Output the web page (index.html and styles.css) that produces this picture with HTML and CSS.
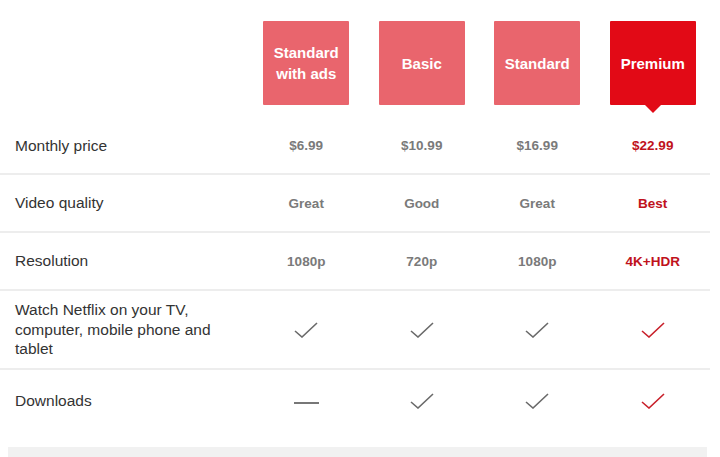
FILE: index.html
```html
<!DOCTYPE html>
<html lang="en">

<head>
  <meta charset="UTF-8" />
  <meta name="viewport" content="width=device-width, initial-scale=1.0" />
  <title>Plan comparison</title>
  <link rel="stylesheet" href="styles.css">
</head>

<body>
  <div class="plans">
    <div class="plan-row header-row">
      <div></div>
      <div class="plan-tile">Standard<br />with ads</div>
      <div class="plan-tile">Basic</div>
      <div class="plan-tile">Standard</div>
      <div class="plan-tile selected">Premium</div>
    </div>

    <div class="plan-row price-row">
      <div class="feature">Monthly price</div>
      <div class="value">$6.99</div>
      <div class="value">$10.99</div>
      <div class="value">$16.99</div>
      <div class="value selected">$22.99</div>
    </div>

    <div class="plan-row">
      <div class="feature">Video quality</div>
      <div class="value">Great</div>
      <div class="value">Good</div>
      <div class="value">Great</div>
      <div class="value selected">Best</div>
    </div>

    <div class="plan-row">
      <div class="feature">Resolution</div>
      <div class="value">1080p</div>
      <div class="value">720p</div>
      <div class="value">1080p</div>
      <div class="value selected">4K+HDR</div>
    </div>

    <div class="plan-row tall-row">
      <div class="feature">Watch Netflix on your TV,<br />computer, mobile phone and<br />tablet</div>
      <div class="value"><svg class="check" viewBox="0 0 24 16"><path d="M1 9 L8 15 L23 1" /></svg></div>
      <div class="value"><svg class="check" viewBox="0 0 24 16"><path d="M1 9 L8 15 L23 1" /></svg></div>
      <div class="value"><svg class="check" viewBox="0 0 24 16"><path d="M1 9 L8 15 L23 1" /></svg></div>
      <div class="value selected"><svg class="check" viewBox="0 0 24 16"><path d="M1 9 L8 15 L23 1" /></svg></div>
    </div>

    <div class="plan-row last-row">
      <div class="feature">Downloads</div>
      <div class="value"><span class="dash"></span></div>
      <div class="value"><svg class="check" viewBox="0 0 24 16"><path d="M1 9 L8 15 L23 1" /></svg></div>
      <div class="value"><svg class="check" viewBox="0 0 24 16"><path d="M1 9 L8 15 L23 1" /></svg></div>
      <div class="value selected"><svg class="check" viewBox="0 0 24 16"><path d="M1 9 L8 15 L23 1" /></svg></div>
    </div>

    <div class="bottom-bar"></div>
  </div>
</body>

</html>
```

FILE: styles.css
```css
body {
  margin: 0;
  background: #ffffff;
  font-family: "Liberation Sans", Arial, sans-serif;
}

.plans {
  width: 710px;
}

.plan-row {
  display: grid;
  grid-template-columns: 248.5px repeat(4, 115.5px);
  align-items: center;
  border-bottom: 2px solid #ededed;
}

.header-row {
  height: 118px;
  align-items: start;
  padding-top: 21px;
  box-sizing: border-box;
  border-bottom: none;
}

.price-row {
  height: 57px;
  box-sizing: border-box;
}

.plan-row:nth-child(3),
.plan-row:nth-child(4) {
  height: 58px;
  box-sizing: border-box;
}

.tall-row {
  height: 79px;
  box-sizing: border-box;
}

.last-row {
  height: 61px;
  border-bottom: none;
}

.plan-tile {
  position: relative;
  justify-self: center;
  width: 86px;
  height: 84px;
  display: flex;
  align-items: center;
  justify-content: center;
  text-align: center;
  background-color: #e9656d;
  color: #ffffff;
  font-size: 15px;
  font-weight: bold;
  line-height: 21px;
  border-radius: 1px;
}

.plan-tile.selected {
  background-color: #e20a16;
}

.plan-tile.selected::after {
  content: "";
  position: absolute;
  left: 50%;
  bottom: -8px;
  margin-left: -8px;
  border-left: 8px solid transparent;
  border-right: 8px solid transparent;
  border-top: 8px solid #e20a16;
}

.feature {
  padding-left: 15px;
  color: #333333;
  font-size: 15.5px;
  line-height: 19.5px;
}

.value {
  display: flex;
  justify-content: center;
  align-items: center;
  color: #7a7a7a;
  font-size: 13.5px;
  font-weight: bold;
}

.value.selected {
  color: #c0121c;
}

.check {
  width: 24px;
  height: 16px;
  fill: none;
  stroke: #6a6a6a;
  stroke-width: 1.6;
}

.value.selected .check {
  stroke: #c8202a;
}

.dash {
  display: block;
  width: 25px;
  height: 2px;
  background-color: #777777;
  margin-top: 4px;
}

.bottom-bar {
  margin: 16px 0 0 8px;
  width: 699px;
  height: 12px;
  background-color: #f1f1f1;
}
```
